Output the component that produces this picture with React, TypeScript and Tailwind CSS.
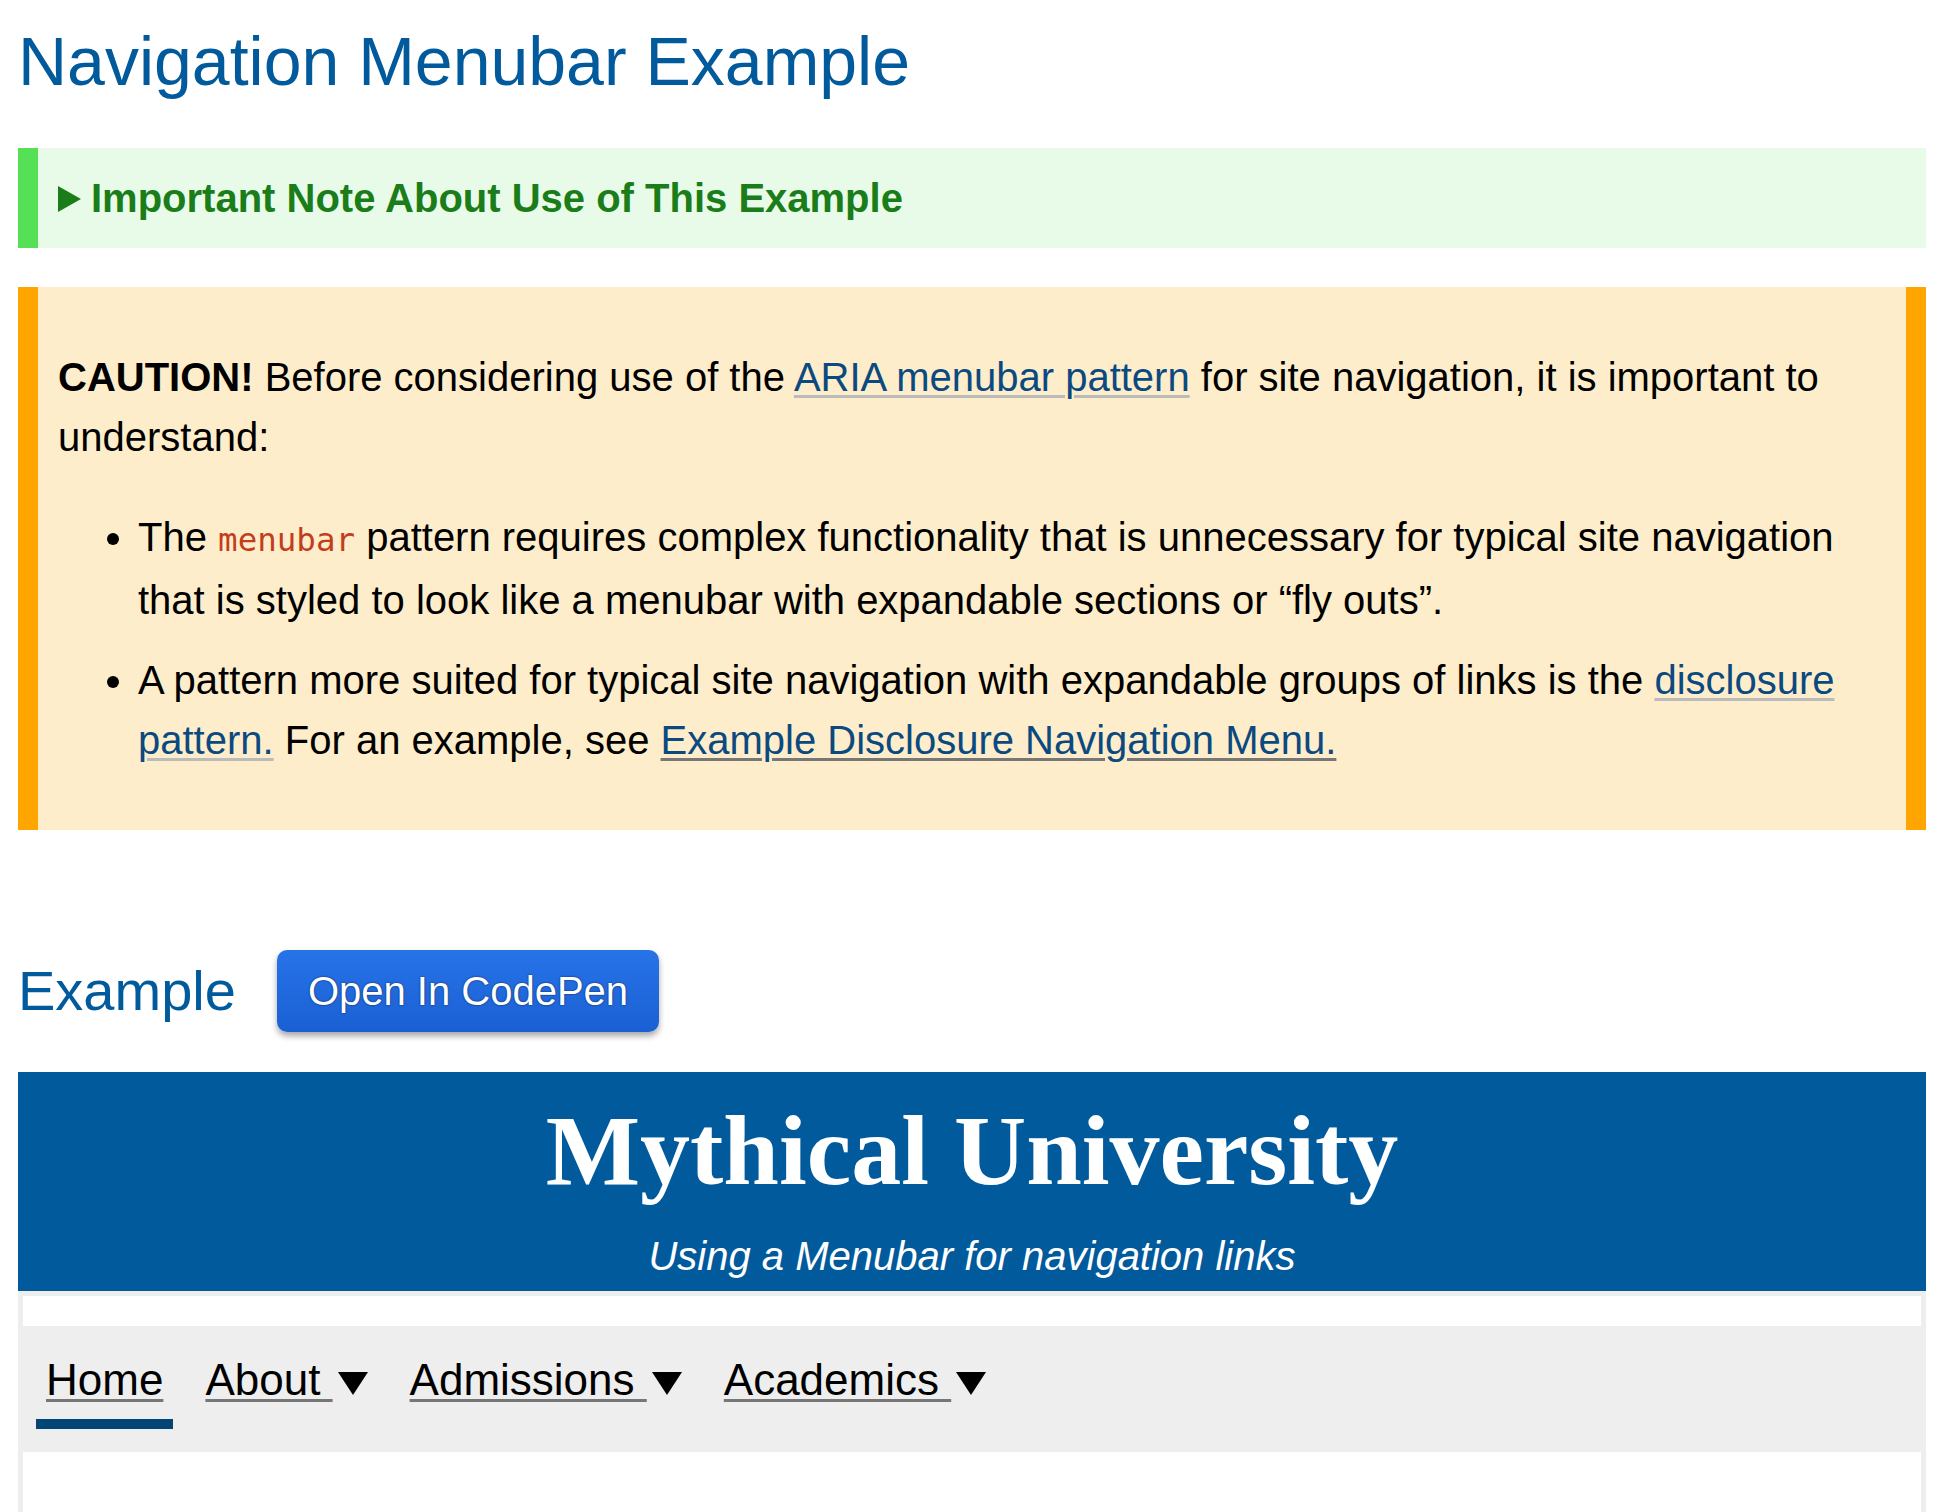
import React from "react";

const linkLight =
  "text-[#0b4a80] underline decoration-[#bbbbbb] decoration-3 underline-offset-[4px]";
const linkDark =
  "text-[#0b4a80] underline decoration-[#777777] decoration-3 underline-offset-[4px]";

function Triangle({ className }: { className?: string }) {
  return (
    <svg
      className={className}
      width="30"
      height="23"
      viewBox="0 0 30 23"
      aria-hidden="true"
    >
      <polygon points="0,0 30,0 15,23" fill="#000" />
    </svg>
  );
}

const menu = [
  { name: "Home", current: true, popup: false },
  { name: "About", current: false, popup: true },
  { name: "Admissions", current: false, popup: true },
  { name: "Academics", current: false, popup: true },
];

export default function App() {
  return (
    <div
      className="min-h-screen bg-white pl-[18px] pr-[22px] text-black"
      style={{ fontFamily: '"Liberation Sans", Arial, sans-serif' }}
    >
      <h1 className="pt-[22px] text-[68px] leading-[78px] font-normal text-[#005a9c]">
        Navigation Menubar Example
      </h1>

      {/* note */}
      <div className="mt-[48px] border-l-[20px] border-[#55e055] bg-[#e8fbe8] py-[20px] pl-[20px]">
        <div className="text-[40px] leading-[60px] font-bold text-[#1a7d1a]">
          <svg
            className="mr-[10px] inline-block align-baseline"
            width="23"
            height="26"
            viewBox="0 0 23 26"
            aria-hidden="true"
          >
            <polygon points="0,0 23,13 0,26" fill="#1a7d1a" />
          </svg>
          Important Note About Use of This Example
        </div>
      </div>

      {/* caution */}
      <div className="mt-[39px] border-x-[20px] border-[#ffa500] bg-[#feedca] p-[20px] text-[40px] leading-[60px]">
        <p className="mt-[40px]">
          <strong className="font-bold">CAUTION!</strong> Before considering use
          of the <a className={linkLight}>ARIA menubar pattern</a> for site
          navigation, it is important to understand:
        </p>
        <ul className="mt-[40px] mb-[40px] list-disc pl-[80px]">
          <li>
            The{" "}
            <code
              className="text-[32.5px] text-[#c33d1c]"
              style={{ fontFamily: '"DejaVu Sans Mono", monospace' }}
            >
              menubar
            </code>{" "}
            pattern requires complex functionality that is unnecessary for
            typical site navigation that is styled to look like a menubar with
            expandable sections or “fly outs”.
          </li>
          <li className="mt-[20px]">
            A pattern more suited for typical site navigation with expandable
            groups of links is the{" "}
            <a className={linkLight}>disclosure pattern.</a> For an example, see{" "}
            <a className={linkDark}>Example Disclosure Navigation Menu.</a>
          </li>
        </ul>
      </div>

      {/* example heading */}
      <div className="mt-[120px] flex items-center gap-[41px]">
        <h2 className="text-[56px] leading-[64px] font-normal text-[#005a9c]">
          Example
        </h2>
        <button className="flex h-[82px] items-center rounded-[10px] bg-gradient-to-b from-[#2773e8] to-[#1a60d4] px-[31px] text-[40px] leading-[46px] text-white shadow-[0_4px_6px_rgba(0,0,0,0.35)] [text-shadow:0_0_2px_rgba(0,0,0,0.7)]">
          Open In CodePen
        </button>
      </div>

      {/* banner */}
      <div className="mt-[40px] bg-[#005a9c] pt-[24px] pb-[12px] text-center text-white">
        <div
          className="text-[100px] leading-[110px] font-bold"
          style={{ fontFamily: '"Liberation Serif", "Times New Roman", serif' }}
        >
          Mythical University
        </div>
        <div className="mt-[27px] text-[40px] leading-[46px] italic">
          Using a Menubar for navigation links
        </div>
      </div>

      {/* site frame */}
      <div className="border-x-[5px] border-t-[5px] border-[#eeeeee] bg-white">
        <div className="h-[30px]" />
        <nav className="flex h-[126px] items-start gap-[22px] bg-[#eeeeee] pt-[29px] pl-[13px]">
          {menu.map((item) => (
            <div key={item.name} className="px-[10px]">
              <div className="text-[44px] leading-[50px] whitespace-pre">
                <span className="underline decoration-[#777777] decoration-3 underline-offset-[4px]">
                  {item.popup ? item.name + " " : item.name}
                </span>
                {item.popup && (
                  <Triangle className="ml-[5px] inline-block align-baseline" />
                )}
              </div>
              {item.current && (
                <div className="-mx-[10px] mt-[14px] h-[10px] bg-[#034575]" />
              )}
            </div>
          ))}
        </nav>
        <div className="h-[60px]" />
      </div>
    </div>
  );
}
